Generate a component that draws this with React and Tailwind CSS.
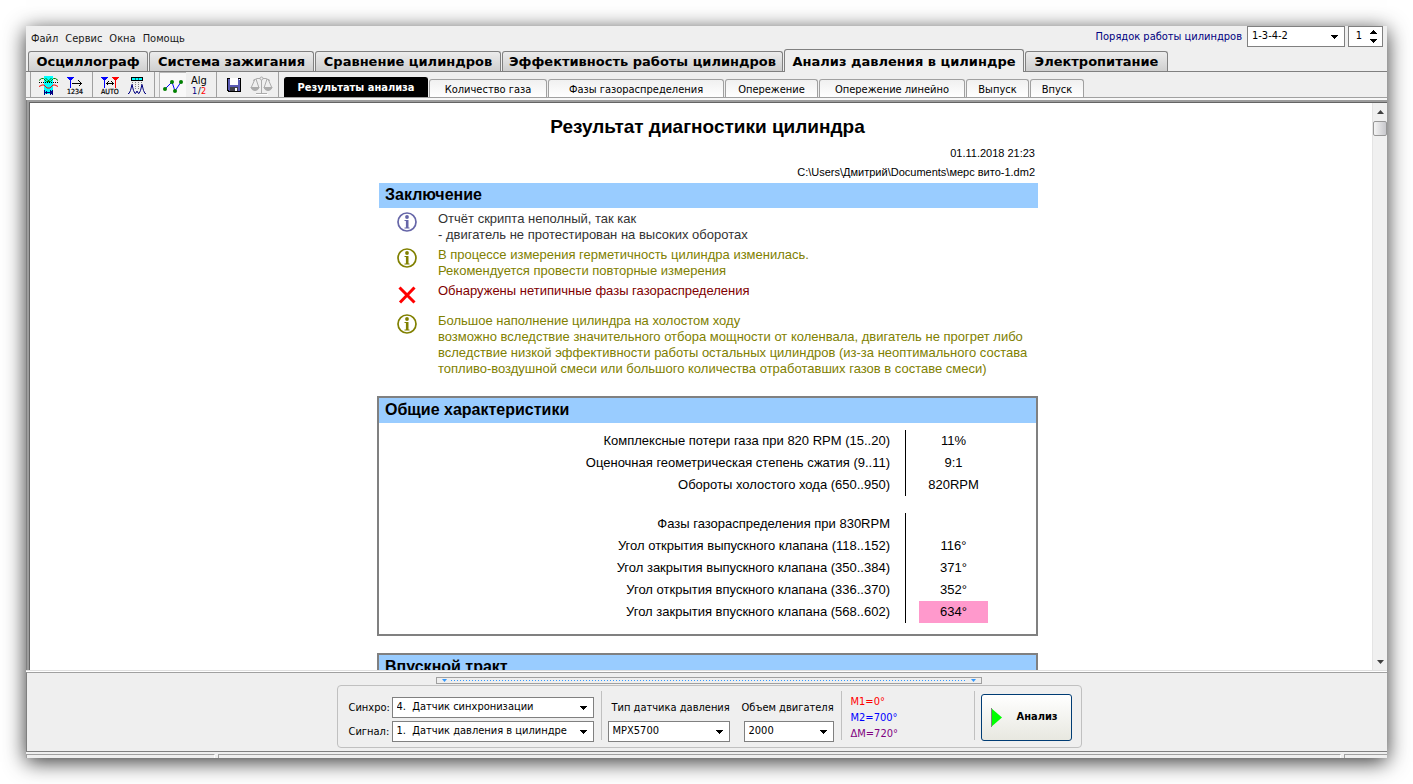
import { useState } from 'react';

const mainTabs = [
  { label: 'Осциллограф', width: 'w-[120px]' },
  { label: 'Система зажигания', width: 'w-[165px]' },
  { label: 'Сравнение цилиндров', width: 'w-[186px]' },
  { label: 'Эффективность работы цилиндров', width: 'w-[281px]' },
  { label: 'Анализ давления в цилиндре', width: 'w-[240px]' },
  { label: 'Электропитание', width: 'w-[143px]' },
];

const subTabs = [
  { label: 'Результаты анализа', width: 'w-[144px]' },
  { label: 'Количество газа', width: 'w-[118px]' },
  { label: 'Фазы газораспределения', width: 'w-[176px]' },
  { label: 'Опережение', width: 'w-[93px]' },
  { label: 'Опережение линейно', width: 'w-[146px]' },
  { label: 'Выпуск', width: 'w-[63px]' },
  { label: 'Впуск', width: 'w-[54px]' },
];

const messages = [
  {
    icon: 'info',
    iconColor: 'text-[#6666a8]',
    color: 'text-[#333333]',
    lines: ['Отчёт скрипта неполный, так как', '- двигатель не протестирован на высоких оборотах'],
  },
  {
    icon: 'info',
    iconColor: 'text-[#808000]',
    color: 'text-[#808000]',
    lines: ['В процессе измерения герметичность цилиндра изменилась.', 'Рекомендуется провести повторные измерения'],
  },
  {
    icon: 'error',
    iconColor: 'text-[#ff0000]',
    color: 'text-[#800000]',
    lines: ['Обнаружены нетипичные фазы газораспределения'],
  },
  {
    icon: 'info',
    iconColor: 'text-[#808000]',
    color: 'text-[#808000]',
    lines: [
      'Большое наполнение цилиндра на холостом ходу',
      'возможно вследствие значительного отбора мощности от коленвала, двигатель не прогрет либо',
      'вследствие низкой эффективности работы остальных цилиндров (из-за неоптимального состава',
      'топливо-воздушной смеси или большого количества отработавших газов в составе смеси)',
    ],
  },
];

const generalRows = [
  ['Комплексные потери газа при 820 RPM (15..20)', '11%'],
  ['Оценочная геометрическая степень сжатия (9..11)', '9:1'],
  ['Обороты холостого хода (650..950)', '820RPM'],
];

const phaseRows = [
  ['Фазы газораспределения при 830RPM', ''],
  ['Угол открытия выпускного клапана (118..152)', '116°'],
  ['Угол закрытия выпускного клапана (350..384)', '371°'],
  ['Угол открытия впускного клапана (336..370)', '352°'],
  ['Угол закрытия впускного клапана (568..602)', '634°', true],
];

const Icon = ({ children }) => (
  <svg width="27" height="25" viewBox="0 0 27 25" fill="none" shapeRendering="crispEdges" aria-hidden="true">
    {children}
  </svg>
);

const PhaseIcon = () => (
  <Icon>
    <rect x="9" y="4" width="9" height="18" fill="#00ffff" />
    <g shapeRendering="auto">
      <path d="M4 8.500l2.500-2h2l3 3h4l3-3h2l2.500 2" stroke="#008000" />
      <path d="M10.500 6l2.500 2.500h1l2.500-2.500" stroke="#008000" />
      <path d="M4 14.500l3-1.500h2l3 3h3l3-3h2l3 1.500" stroke="#ff0000" />
    </g>
    <path d="M4 10.500h19" stroke="#000" strokeDasharray="1 1" />
    <path d="M9.500 18v5M17.500 18v5M10 20.500h7" stroke="#000080" />
    <path d="M10 20l2-2v5l-2-2zM17 20l-2-2v5l2-2z" fill="#000080" />
  </Icon>
);

const CursorIcon = () => (
  <Icon>
    <path d="M5 5h7l-3 4h-1z" fill="#0000ff" />
    <path d="M8.500 5v11" stroke="#0000ff" />
    <path d="M10 11.500h10M16.500 8.500l3 3-3 3" stroke="#000" />
    <text x="5" y="22" fontSize="7" fill="#000" stroke="#000" strokeWidth="0.200" fontFamily="DejaVu Sans Condensed, sans-serif">1234</text>
  </Icon>
);

const AutoIcon = () => (
  <Icon>
    <path d="M4 5h7l-3 4h-1z" fill="#0000ff" />
    <path d="M7.500 5v11" stroke="#0000ff" />
    <path d="M15 5h7l-3 4h-1z" fill="#ff0000" />
    <path d="M18.500 5v11" stroke="#ff0000" />
    <path d="M9 11.500h8M11.500 9.500l-2 2 2 2M14.500 9.500l2 2-2 2" stroke="#000" />
    <text x="4" y="22" fontSize="7" fill="#000" stroke="#000" strokeWidth="0.200" fontFamily="DejaVu Sans Condensed, sans-serif">AUTO</text>
  </Icon>
);

const PeaksIcon = () => (
  <Icon>
    <rect x="7" y="5" width="12" height="4" fill="#000" />
    <rect x="8" y="6" width="10" height="2" fill="#00ffff" />
    <path d="M11.500 6v2M14.500 6v2" stroke="#008080" />
    <path d="M8.500 10v3M11.500 10v7M14.500 10v7M17.500 10v3" stroke="#808080" strokeDasharray="1 1" />
    <path
      d="M4 21.500h1l1.500-3 1.500-6 1.500 6 1.500 3 1-.5 1-2 1 2 1 .5 1.500-3 1.500-6 1.500 6 1.500 3h1"
      stroke="#000080"
      shapeRendering="auto"
    />
  </Icon>
);

const GraphIcon = () => (
  <Icon>
    <path d="M6 17l7-7 3 9 6-9" stroke="#0000ff" shapeRendering="auto" />
    <g fill="#008000" shapeRendering="auto">
      <circle cx="6" cy="17" r="2" />
      <circle cx="13" cy="10" r="2" />
      <circle cx="16" cy="19" r="2" />
      <circle cx="22" cy="10" r="2" />
    </g>
  </Icon>
);

const AlgIcon = () => (
  <Icon>
    <g fontSize="11" fontFamily="DejaVu Sans Condensed, sans-serif">
      <text x="5" y="12" fill="#000">Alg</text>
      <text x="6" y="22" fontSize="9" fill="#000080">1</text>
      <text x="12" y="22" fontSize="9" fill="#000">/</text>
      <text x="15" y="22" fontSize="9" fill="#ff0000">2</text>
    </g>
  </Icon>
);

const SaveIcon = () => (
  <Icon>
    <path d="M6 6h14v14h-13l-1-1z" fill="#000" />
    <path d="M7 7h12v12h-11l-1-1z" fill="#5a5ab4" />
    <rect x="9" y="6" width="8" height="7" fill="#fff" />
    <rect x="9" y="15" width="8" height="4" fill="#404048" />
    <rect x="14" y="16" width="2" height="3" fill="#fff" />
    <rect x="18" y="7" width="1" height="1" fill="#fff" />
  </Icon>
);

const ScalesIcon = () => (
  <Icon>
    <g stroke="#ababab" shapeRendering="auto">
      <path d="M13.500 5v16M8 21.500h11M5 8.500l4-2h9l4 2M7 7l-4 9M8 7l3 9M20 7l4 9M19 7l-3 9" />
      <path d="M3 15.500h8q-1 3-4 3t-4-3zM16 15.500h8q-1 3-4 3t-4-3z" fill="#ababab" />
      <circle cx="13.500" cy="6.500" r="1.500" fill="#efefef" />
    </g>
    <path d="M8 22.500h12" stroke="#fff" />
  </Icon>
);

const toolGroups = [
  [
    { title: 'Фазы', icon: PhaseIcon },
    { title: 'Курсор', icon: CursorIcon },
  ],
  [
    { title: 'Авто', icon: AutoIcon },
    { title: 'Пики', icon: PeaksIcon },
  ],
  [
    { title: 'График', icon: GraphIcon, pressed: true },
    { title: 'Алгоритм', icon: AlgIcon },
  ],
  [
    { title: 'Сохранить', icon: SaveIcon },
    { title: 'Сравнить', icon: ScalesIcon },
  ],
];

const Select = ({ id, options, className }) => (
  <span className={`relative inline-flex h-[21px] ${className}`}>
    <select
      id={id}
      className="w-full h-full appearance-none border border-[#808080] bg-white pl-1 pr-5 text-[11px] text-black outline-none"
    >
      {options.map(option => (
        <option key={option}>{option}</option>
      ))}
    </select>
    <svg className="absolute right-[7px] top-[9px] pointer-events-none" width="8" height="4" viewBox="0 0 8 4" shapeRendering="crispEdges" aria-hidden="true">
      <path d="M0 0h8L4 4z" fill="#000" />
    </svg>
  </span>
);

const MessageIcon = ({ type }) => {
  if (type === 'error') {
    return (
      <svg className="mt-[2px]" width="20" height="20" viewBox="0 0 20 20" fill="none" stroke="currentColor" strokeWidth="3" aria-hidden="true">
        <path d="M2.500 2.500l15 15M17.500 2.500L3 17.500" />
      </svg>
    );
  }
  return (
    <svg className="mt-px" width="20" height="20" viewBox="0 0 20 20" fill="none" stroke="currentColor" aria-hidden="true">
      <circle cx="10" cy="10" r="9" strokeWidth="1.700" />
      <circle cx="10" cy="5" r="1.900" fill="currentColor" stroke="none" />
      <path d="M7.500 8.500h3M7.500 16h5" strokeWidth="1" />
      <path d="M10.200 8v8" strokeWidth="2.600" />
    </svg>
  );
};

const Rows = ({ rows }) => (
  <tbody>
    {rows.map(([name, value, alert]) => (
      <tr key={name} className="h-[22px]">
        <th className="border-r border-black pr-[15px] text-right font-normal">{name}</th>
        <td></td>
        <td className={`text-center ${alert ? 'bg-[#ff99cc]' : ''}`}>{value}</td>
        <td></td>
      </tr>
    ))}
  </tbody>
);

const Report = () => (
  <article className="w-[661px] mx-auto font-['Liberation_Sans',sans-serif] text-black">
    <h1 className="pt-3 text-center text-[19px] leading-[24px] font-bold">Результат диагностики цилиндра</h1>
    <div className="pt-[5px] pr-[3px] text-right text-[11px] leading-[19px]">
      <p>01.11.2018 21:23</p>
      <p>C:\Users\Дмитрий\Documents\мерс вито-1.dm2</p>
    </div>

    <section className="mt-px ml-[2px]">
      <h2 className="h-[25px] bg-[#99ccff] pl-[6px] text-[16px] leading-[24px] font-bold">Заключение</h2>
      <ul className="pt-[3px] pb-[15px]">
        {messages.map(message => (
          <li
            key={message.lines[0]}
            className={`flex pb-1 text-[13px] leading-[16px] ${message.icon === 'error' ? 'min-h-[30px]' : ''}`}
          >
            <span className={`w-[59px] pl-[18px] ${message.iconColor}`}>
              <MessageIcon type={message.icon} />
            </span>
            <div className={`whitespace-nowrap ${message.color}`}>
              {message.lines.map(line => (
                <p key={line}>{line}</p>
              ))}
            </div>
          </li>
        ))}
      </ul>
    </section>

    <section className="border-2 border-[#808080] pb-[11px]">
      <h2 className="h-[25px] bg-[#99ccff] pl-[6px] text-[16px] leading-[24px] font-bold">Общие характеристики</h2>
      <table className="mt-[7px] w-full table-fixed border-separate border-spacing-0 text-[13px] leading-[16px]">
        <colgroup>
          <col />
          <col className="w-[13px]" />
          <col className="w-[69px]" />
          <col className="w-[48px]" />
        </colgroup>
        <Rows rows={generalRows} />
        <tbody>
          <tr className="h-[17px]">
            <td colSpan={4}></td>
          </tr>
        </tbody>
        <Rows rows={phaseRows} />
      </table>
    </section>

    <section className="mt-[17px] border-2 border-[#808080] pb-[11px]">
      <h2 className="h-[25px] bg-[#99ccff] pl-[6px] text-[16px] leading-[24px] font-bold">Впускной тракт</h2>
    </section>
  </article>
);

const App = () => {
  const [activeMain, setActiveMain] = useState(4);
  const [activeSub, setActiveSub] = useState(0);

  return (
    <div className="h-screen bg-white p-[26px] font-['DejaVu_Sans_Condensed','DejaVu_Sans',sans-serif] text-[11px] text-black">
      <div className="flex h-full flex-col overflow-hidden bg-[#efefef] shadow-[0_4px_20px_rgba(0,0,0,0.8)]">
        {/* Menu */}
        <header className="flex h-[23px] shrink-0 items-start justify-between pl-[5px] pr-1">
          <nav className="flex gap-[7px] pt-[5px] leading-4">
            {['Файл', 'Сервис', 'Окна', 'Помощь'].map(item => (
              <button key={item} className="text-[#1a1a1a]">{item}</button>
            ))}
          </nav>
          <div className="flex items-center">
            <label htmlFor="order" className="mr-[5px] pt-[2px] text-[#000080]">Порядок работы цилиндров</label>
            <Select id="order" options={['1-3-4-2', '1-2-4-3']} className="w-[98px]" />
            <div className="ml-[3px] flex h-[21px] w-[35px] items-center border border-[#808080] bg-white">
              <input aria-label="Цилиндр" defaultValue="1" className="w-5 bg-transparent text-center outline-none" />
              <svg width="8" height="13" viewBox="0 0 8 13" shapeRendering="crispEdges" aria-hidden="true">
                <path d="M4 0l4 4H0zM4 13l4-4H0z" fill="#000" />
              </svg>
            </div>
          </div>
        </header>

        {/* Main tabs */}
        <div role="tablist" className="flex h-[23px] shrink-0 items-end gap-px border-b border-[#808080] pl-[2px]">
          {mainTabs.map((tab, i) => (
            <button
              key={tab.label}
              role="tab"
              aria-selected={i === activeMain}
              onClick={() => setActiveMain(i)}
              className={`whitespace-nowrap rounded-t-[3px] border border-b-0 border-[#808080] font-['DejaVu_Sans',sans-serif] text-[13px] font-bold leading-[19px] ${tab.width} ${
                i === activeMain ? '-mb-px h-[23px] bg-[#efefef]' : 'h-[20px] bg-linear-to-b from-[#ececec] to-[#cfcfcf]'
              }`}
            >
              {tab.label}
            </button>
          ))}
        </div>

        {/* Toolbar */}
        <div className="flex h-[26px] shrink-0 items-end border-b border-[#a0a0a0] pl-1">
          {toolGroups.map((group, i) => (
            <div key={i} className="flex h-[25px] w-[62px] border-l border-[#a0a0a0] pl-1">
              {group.map(({ title, icon: ToolIcon, pressed }) => (
                <button
                  key={title}
                  aria-label={title}
                  className={`h-[25px] w-[27px] ${pressed ? 'bg-[#f8f8f8] shadow-[inset_1px_1px_0_#b8b8b8]' : ''}`}
                >
                  <ToolIcon />
                </button>
              ))}
            </div>
          ))}
          <div role="tablist" className="flex h-[25px] items-end gap-px border-l border-[#a0a0a0] pl-[5px]">
            {subTabs.map((tab, i) => (
              <button
                key={tab.label}
                role="tab"
                aria-selected={i === activeSub}
                onClick={() => setActiveSub(i)}
                className={`whitespace-nowrap rounded-t-[3px] border border-b-0 pt-[2px] ${tab.width} ${
                  i === activeSub
                    ? 'h-[20px] border-black bg-black font-bold text-white'
                    : 'h-[18px] border-[#a0a0a0] bg-linear-to-b from-[#f0f0f0] to-white'
                }`}
              >
                {tab.label}
              </button>
            ))}
          </div>
        </div>

        {/* Report area */}
        <div className="h-[2px] shrink-0 bg-[#f8f8f8]"></div>
        <main className="flex min-h-0 flex-1 border-l border-[#808080]">
          <div className="flex min-w-0 flex-1 border-l-2 border-t-2 border-[#9c9c9c]">
            <div className="flex min-w-0 flex-1 border-l border-t border-[#646464] bg-white">
              <div className="min-w-0 flex-1 overflow-hidden pl-[13px]">
                <Report />
              </div>
              <div className="flex w-[15px] shrink-0 flex-col items-center justify-between border-l border-[#e4e4e4] bg-[#f0f0f0] pt-[7px] pb-[6px]">
                <div className="flex w-full flex-col items-center gap-[7px]">
                  <svg width="7" height="4" viewBox="0 0 7 4" aria-hidden="true">
                    <path d="M0 4l3.500-4L7 4z" fill="#404040" />
                  </svg>
                  <div className="h-[15px] w-full rounded-[2px] border border-[#979797] bg-linear-to-r from-[#f4f4f4] to-[#c8c8cc]"></div>
                </div>
                <svg width="7" height="4" viewBox="0 0 7 4" aria-hidden="true">
                  <path d="M0 0l3.500 4L7 0z" fill="#404040" />
                </svg>
              </div>
            </div>
          </div>
        </main>

        {/* Bottom panel */}
        <footer className="shrink-0 border-t border-[#e0e0e0]">
          <div className="h-px bg-white"></div>
          <div className="flex h-[80px] flex-col items-center border-y border-l border-b-[#808080] border-l-[#808080] border-t-[#a0a0a0] pl-1">
            <div className="mt-1 flex h-[7px] w-[546px] shrink-0 items-center border border-[#a0a0a0] px-[5px]">
              <svg width="5" height="3" viewBox="0 0 5 3" aria-hidden="true"><path d="M0 0h5L2.500 3z" fill="#3399ff" /></svg>
              <div className="mx-1 h-px flex-1 bg-[repeating-linear-gradient(90deg,#3399ff_0_1px,transparent_1px_3px)]"></div>
              <svg width="5" height="3" viewBox="0 0 5 3" aria-hidden="true"><path d="M0 0h5L2.500 3z" fill="#3399ff" /></svg>
            </div>
            <div className="mt-px flex h-[63px] w-[745px] shrink-0 rounded-[4px] border border-[#c0c0c0] pl-[11px]">
              <div className="flex w-[252px] flex-col gap-[3px] pt-[11px]">
                <div className="flex items-center">
                  <label htmlFor="sync" className="w-[43px] pt-px">Синхро:</label>
                  <Select id="sync" options={['4.\u00a0 Датчик синхронизации']} className="w-[202px]" />
                </div>
                <div className="flex items-center">
                  <label htmlFor="signal" className="w-[43px] pt-px">Сигнал:</label>
                  <Select id="signal" options={['1.\u00a0 Датчик давления в цилиндре']} className="w-[202px]" />
                </div>
              </div>
              <div className="mt-[5px] h-[49px] w-px bg-[#c0c0c0]"></div>
              <div className="ml-[6px] flex w-[122px] flex-col gap-[3px] pt-[11px]">
                <label htmlFor="sensor" className="whitespace-nowrap pl-1 leading-[21px]">Тип датчика давления</label>
                <Select id="sensor" options={['MPX5700']} className="w-full" />
              </div>
              <div className="ml-3 flex w-[92px] flex-col gap-[3px] pt-[11px]">
                <label htmlFor="volume" className="whitespace-nowrap leading-[21px]">Объем двигателя</label>
                <Select id="volume" options={['2000']} className="ml-[2px]" />
              </div>
              <div className="ml-[7px] mt-[5px] h-[49px] w-px bg-[#c0c0c0]"></div>
              <div className="w-[132px] pl-[9px] pt-2 leading-[16px]">
                <p className="text-[#ff0000]">M1=0°</p>
                <p className="text-[#0000ff]">M2=700°</p>
                <p className="text-[#800080]">ΔM=720°</p>
              </div>
              <div className="mt-[5px] h-[49px] w-px bg-[#c0c0c0]"></div>
              <button className="ml-[6px] mt-2 flex h-[47px] w-[91px] items-center rounded-[3px] border border-[#003c74] bg-linear-to-b from-white to-[#e8e8e0] pl-[9px] font-bold">
                <svg width="11" height="19" viewBox="0 0 11 19" aria-hidden="true">
                  <path d="M0 0l11 9.500L0 19z" fill="#00ff00" />
                  <path d="M.5 0v19" stroke="#808080" />
                </svg>
                <span className="pl-[15px]">Анализ</span>
              </button>
            </div>
          </div>
          {/* Status bar */}
          <div className="flex h-[6px] gap-[3px] pt-[2px]">
            <div className="w-[189px] border-l border-t border-[#a0a0a0] border-r border-r-white"></div>
            <div className="flex-1 border-l border-t border-[#a0a0a0] border-r border-r-white"></div>
            <div className="w-[43px] border-l border-t border-[#a0a0a0]"></div>
          </div>
        </footer>
      </div>
    </div>
  );
};

export default App;
